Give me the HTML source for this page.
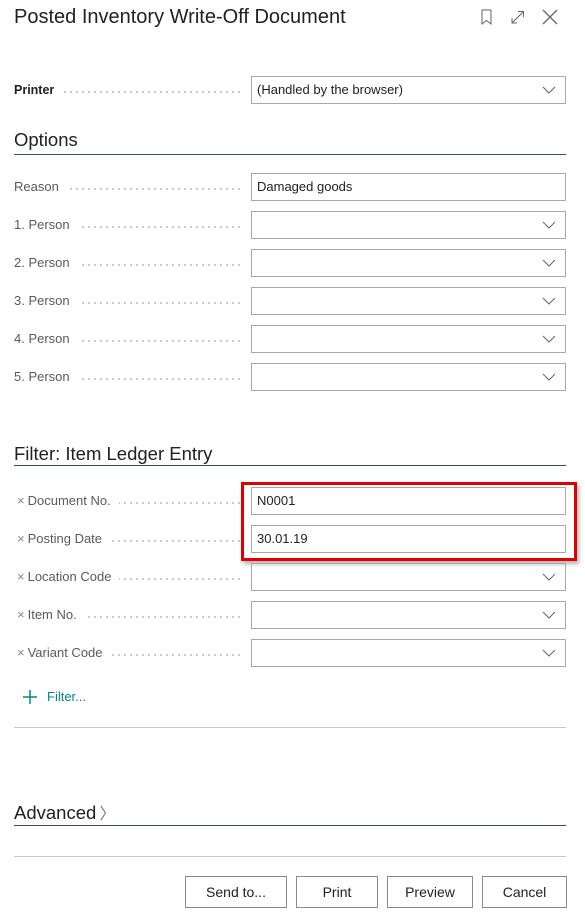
<!DOCTYPE html>
<html><head><style>
body{margin:0;width:585px;height:919px;background:#fff;font-family:"Liberation Sans",sans-serif;color:#212121;position:relative;overflow:hidden}
.a{position:absolute}
.t{left:14px;top:6px;font-size:20px;color:#212121}
.lbl{left:14px;font-size:13px;color:#5a5a5a;width:228px;height:28px;line-height:28px;overflow:hidden;white-space:nowrap}
.lbl>span{background:#fff;padding-right:8px;position:relative;z-index:1}
.lbl:after{content:"";position:absolute;left:0;right:0;top:15px;height:2px;background-image:radial-gradient(circle,#b8b8b8 0.8px,transparent 1px);background-size:6px 2px;background-position:right 0 top 0}
.lbl.x{left:17px;width:225px}
.xx{color:#888;margin-right:3px}
.inp{left:251px;height:26px;border:1px solid #a8a8a8;font-size:13px;line-height:26px;padding-left:5px;width:308px;color:#212121}
.chev{position:absolute;right:9px;top:9px}
.h{left:14px;font-size:18.5px;color:#212121}
.line{left:14px;width:552px;height:1px;background:#3a4a5e}
.btn{top:876px;height:30px;border:1px solid #8a8a8a;font-size:14px;text-align:center;line-height:30px;color:#212121}
</style></head><body>
<div class="a t">Posted Inventory Write-Off Document</div>
<svg class="a" style="left:478px;top:8px" width="90" height="18" viewBox="0 0 90 18" fill="none" stroke="#666" stroke-width="1">
<path d="M4 2h9v14l-4.5-3.5L4 16z"/>
<path d="M34 15l11-11M40 3.5h5.5v5.5M34 10v5h5"/>
<path d="M65 2l14 14M79 2L65 16" stroke-width="1.3"/>
</svg>

<div class="a lbl" style="top:76px;color:#212121;font-weight:bold;font-size:12.5px"><span>Printer</span></div>
<div class="a inp" style="top:76px">(Handled by the browser)<svg class="chev" width="14" height="8"><path d="M1 1l6 6 6-6" fill="none" stroke="#666"/></svg></div>

<div class="a h" style="top:129px">Options</div>
<div class="a line" style="top:154px"></div>

<div class="a lbl" style="top:173px"><span>Reason</span></div>
<div class="a inp" style="top:173px">Damaged goods</div>
<div class="a lbl" style="top:211px"><span>1. Person</span></div>
<div class="a inp" style="top:211px"><svg class="chev" width="14" height="8"><path d="M1 1l6 6 6-6" fill="none" stroke="#666"/></svg></div>
<div class="a lbl" style="top:249px"><span>2. Person</span></div>
<div class="a inp" style="top:249px"><svg class="chev" width="14" height="8"><path d="M1 1l6 6 6-6" fill="none" stroke="#666"/></svg></div>
<div class="a lbl" style="top:287px"><span>3. Person</span></div>
<div class="a inp" style="top:287px"><svg class="chev" width="14" height="8"><path d="M1 1l6 6 6-6" fill="none" stroke="#666"/></svg></div>
<div class="a lbl" style="top:325px"><span>4. Person</span></div>
<div class="a inp" style="top:325px"><svg class="chev" width="14" height="8"><path d="M1 1l6 6 6-6" fill="none" stroke="#666"/></svg></div>
<div class="a lbl" style="top:363px"><span>5. Person</span></div>
<div class="a inp" style="top:363px"><svg class="chev" width="14" height="8"><path d="M1 1l6 6 6-6" fill="none" stroke="#666"/></svg></div>

<div class="a h" style="top:443px">Filter: Item Ledger Entry</div>
<div class="a line" style="top:465px"></div>

<div class="a lbl x" style="top:487px"><span><i class="xx" style="font-style:normal">×</i>Document No.</span></div>
<div class="a inp" style="top:487px">N0001</div>
<div class="a lbl x" style="top:525px"><span><i class="xx" style="font-style:normal">×</i>Posting Date</span></div>
<div class="a inp" style="top:525px">30.01.19</div>
<div class="a" style="left:241px;top:482px;width:330px;height:73px;border:3px solid #e00000;box-shadow:2px 3px 4px rgba(0,0,0,0.3)"></div>
<div class="a lbl x" style="top:563px"><span><i class="xx" style="font-style:normal">×</i>Location Code</span></div>
<div class="a inp" style="top:563px"><svg class="chev" width="14" height="8"><path d="M1 1l6 6 6-6" fill="none" stroke="#666"/></svg></div>
<div class="a lbl x" style="top:601px"><span><i class="xx" style="font-style:normal">×</i>Item No.</span></div>
<div class="a inp" style="top:601px"><svg class="chev" width="14" height="8"><path d="M1 1l6 6 6-6" fill="none" stroke="#666"/></svg></div>
<div class="a lbl x" style="top:639px"><span><i class="xx" style="font-style:normal">×</i>Variant Code</span></div>
<div class="a inp" style="top:639px"><svg class="chev" width="14" height="8"><path d="M1 1l6 6 6-6" fill="none" stroke="#666"/></svg></div>

<svg class="a" style="left:22px;top:689px" width="16" height="16"><path d="M8 1v14M1 8h14" stroke="#00858a" stroke-width="1.5"/></svg>
<div class="a" style="left:47px;top:689px;font-size:13px;color:#00858a">Filter...</div>
<div class="a" style="left:14px;top:727px;width:552px;height:1px;background:#c8c8c8"></div>

<div class="a h" style="top:800px">Advanced<span style="color:#777;font-size:16px">&thinsp;〉</span></div>
<div class="a line" style="top:825px"></div>
<div class="a" style="left:14px;top:856px;width:552px;height:1px;background:#c8c8c8"></div>

<div class="a btn" style="left:185px;width:100px">Send to...</div>
<div class="a btn" style="left:296px;width:80px">Print</div>
<div class="a btn" style="left:387px;width:84px">Preview</div>
<div class="a btn" style="left:482px;width:83px">Cancel</div>
</body></html>
